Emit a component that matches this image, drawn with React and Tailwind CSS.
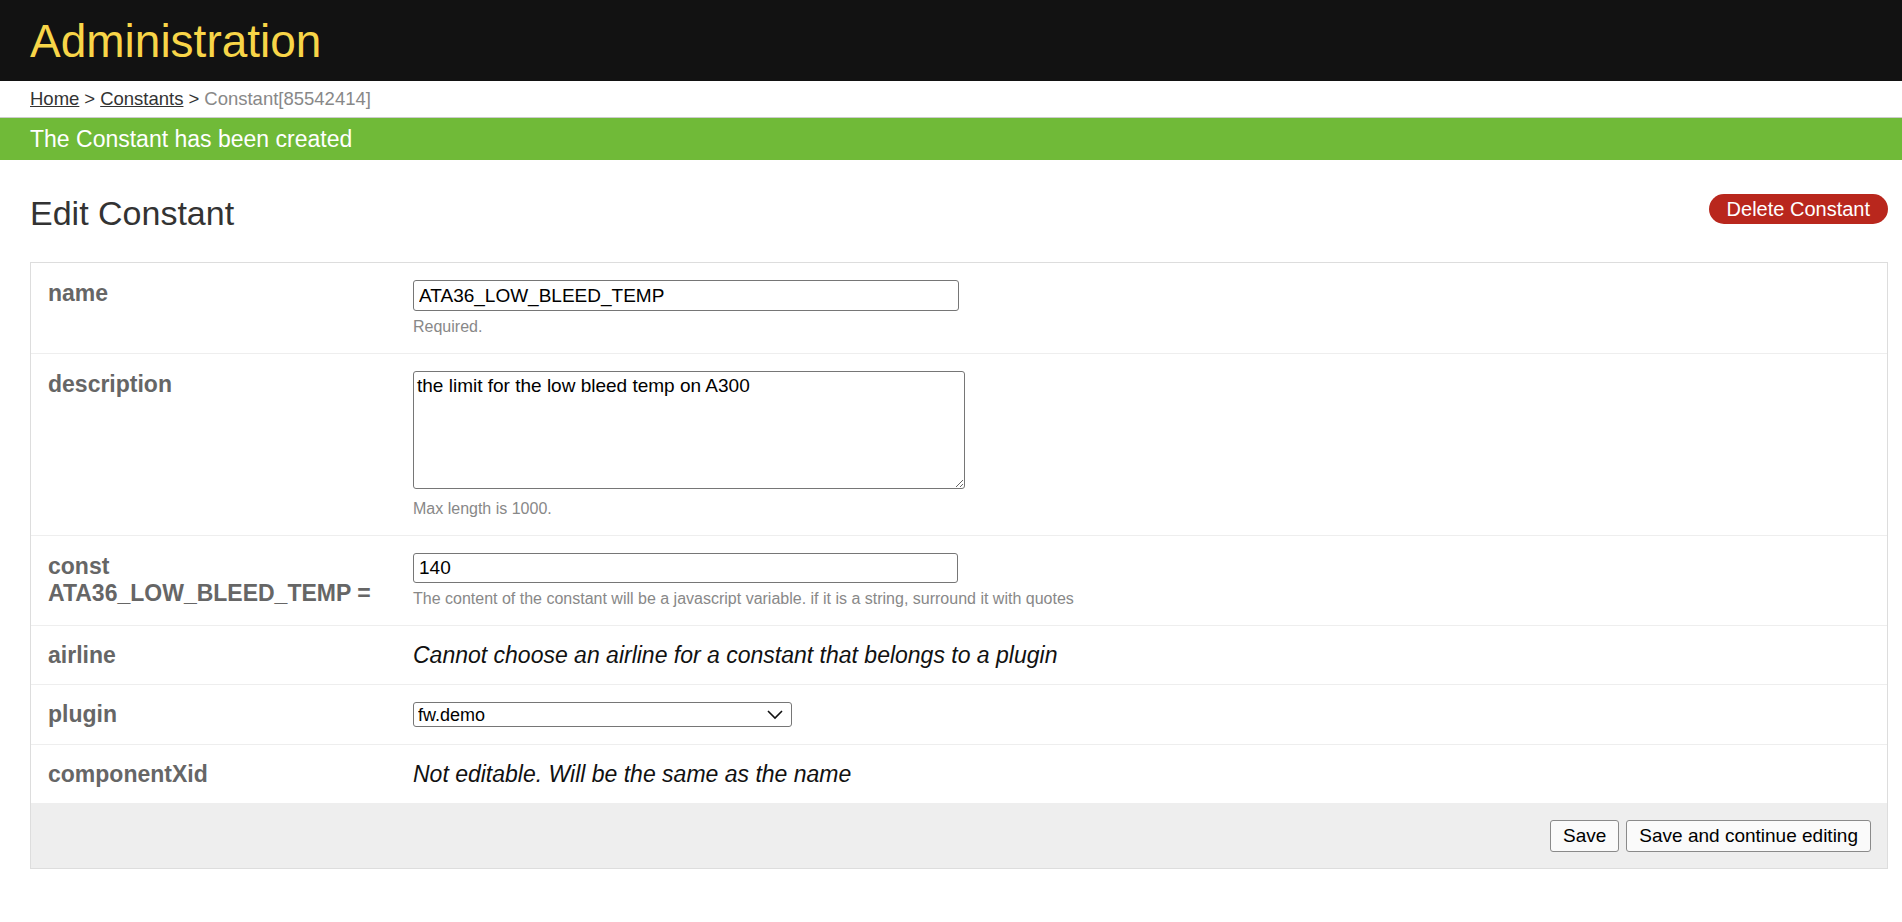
const Row = ({ label, children, last, labelLeading = 'leading-[24px]' }) => (
    <div className={`flex px-[17px] py-[17px] ${last ? '' : 'border-b border-[#eee]'}`}>
        <div className={`w-[365px] shrink-0 text-[23px] ${labelLeading} font-bold text-[#666]`}>{label}</div>
        <div className="flex-1">{children}</div>
    </div>
);

const Help = ({ children, className = '' }) => (
    <p className={`text-[16px] leading-[18px] text-[#888] ${className}`}>{children}</p>
);

export default function App() {
    return (
        <div className="min-h-screen bg-white font-['Liberation_Sans',Arial,sans-serif] text-[#333]">
            <header className="h-[81px] bg-[#121212] px-[30px] flex items-center">
                <h1 className="text-[46px] leading-none text-[#f8d548]">Administration</h1>
            </header>

            <nav className="h-[37px] px-[30px] flex items-center text-[18.5px] border-b border-[#ccc]">
                <a href="#" className="underline text-[#333]">Home</a>
                <span className="mx-[5px]">&gt;</span>
                <a href="#" className="underline text-[#333]">Constants</a>
                <span className="mx-[5px]">&gt;</span>
                <span className="text-[#888]">Constant[85542414]</span>
            </nav>

            <div className="h-[42px] bg-[#70ba38] px-[30px] flex items-center text-white text-[23px]">
                The Constant has been created
            </div>

            <main className="pl-[30px] pr-[14px]">
                <div className="flex justify-between items-start pt-[33px] mb-[29px]">
                    <h2 className="text-[34px] leading-[40px] text-[#333]">Edit Constant</h2>
                    <button className="h-[30px] mt-[1px] px-[18px] rounded-full bg-[#b9271d] text-white text-[20px] leading-none">
                        Delete Constant
                    </button>
                </div>

                <form className="border border-[#ddd]">
                    <Row label="name" labelLeading="leading-[27px]">
                        <input
                            defaultValue="ATA36_LOW_BLEED_TEMP"
                            className="block w-[546px] h-[31px] px-[5px] border border-[#767676] rounded-[3px] text-[19px] text-black"
                        />
                        <Help className="mt-[7px]">Required.</Help>
                    </Row>

                    <Row label="description" labelLeading="leading-[27px]">
                        <textarea
                            defaultValue="the limit for the low bleed temp on A300"
                            className="block w-[552px] h-[118px] px-[3px] py-[2px] border border-[#767676] rounded-[3px] text-[19px] leading-[23px] text-black"
                        />
                        <Help className="mt-[11px]">Max length is 1000.</Help>
                    </Row>

                    <Row label={<>const<br />ATA36_LOW_BLEED_TEMP =</>} labelLeading="leading-[27px]">
                        <input
                            defaultValue="140"
                            className="block w-[545px] h-[30px] px-[5px] border border-[#767676] rounded-[3px] text-[19px] text-black"
                        />
                        <Help className="mt-[7px]">
                            The content of the constant will be a javascript variable. if it is a string, surround it with quotes
                        </Help>
                    </Row>

                    <Row label="airline">
                        <p className="italic text-[23px] leading-[24px] text-[#111]">
                            Cannot choose an airline for a constant that belongs to a plugin
                        </p>
                    </Row>

                    <Row label="plugin">
                        <div className="relative w-[379px] h-[25px]">
                            <select className="appearance-none w-full h-full pl-[4px] border border-[#767676] rounded-[3px] text-[18px] leading-none text-black bg-white">
                                <option>fw.demo</option>
                            </select>
                            <svg className="absolute right-[9px] top-[8px] pointer-events-none" width="16" height="10" viewBox="0 0 16 10" fill="none">
                                <path d="M1 1l7 7 7-7" stroke="#111" strokeWidth="1.6" />
                            </svg>
                        </div>
                    </Row>

                    <Row label="componentXid" last>
                        <p className="italic text-[23px] leading-[24px] text-[#111]">
                            Not editable. Will be the same as the name
                        </p>
                    </Row>

                    <div className="bg-[#eee] flex justify-end gap-[7px] pt-[17px] pb-[16px] pr-[16px]">
                        <button type="button" className="h-[32px] px-[12px] border border-[#8a8a8a] rounded-[3px] bg-[#fafafa] text-[19px] text-black">
                            Save
                        </button>
                        <button type="button" className="h-[32px] px-[12px] border border-[#8a8a8a] rounded-[3px] bg-[#fafafa] text-[19px] text-black">
                            Save and continue editing
                        </button>
                    </div>
                </form>
            </main>
        </div>
    );
}
